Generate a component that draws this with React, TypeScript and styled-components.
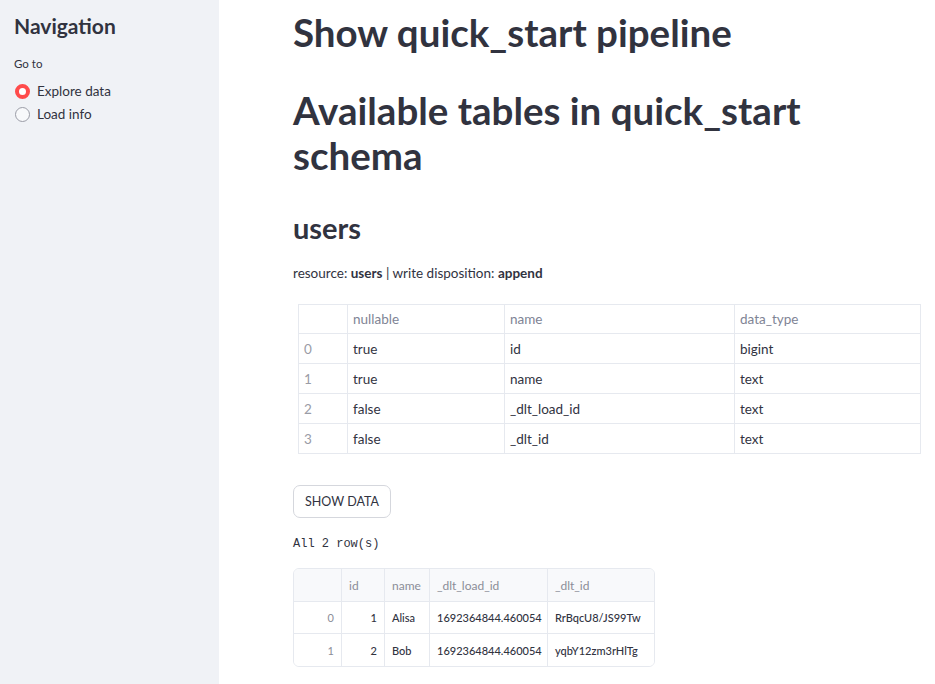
import React from "react";
import styled, { createGlobalStyle } from "styled-components";

const Global = createGlobalStyle`
  html, body { margin: 0; padding: 0; background: #ffffff; }
  body { font-family: "Lato", "Noto Sans", sans-serif; color: #31333f; }
  * { box-sizing: border-box; }
`;

const Page = styled.div`
  display: flex;
  width: 935px;
  height: 684px;
  overflow: hidden;
`;

const Sidebar = styled.aside`
  width: 219px;
  flex: none;
  background: #f0f2f6;
  padding: 12px 14px;
  display: flex;
  flex-direction: column;
`;

const SideTitle = styled.h2`
  margin: 0;
  font-size: 21px;
  font-weight: 700;
  line-height: 28px;
  color: #31333f;
`;

const SideLabel = styled.div`
  margin-top: 17px;
  font-size: 11.5px;
  line-height: 14px;
  color: #31333f;
`;

const RadioList = styled.div`
  margin-top: 12px;
  display: flex;
  flex-direction: column;
  gap: 7px;
  padding-left: 1px;
`;

const RadioRow = styled.label`
  display: flex;
  align-items: center;
  gap: 7px;
  font-size: 13.5px;
  line-height: 16px;
`;

const RadioDot = styled.span<{ $on?: boolean }>`
  width: 15px;
  height: 15px;
  border-radius: 50%;
  flex: none;
  background: ${(p) => (p.$on ? "#ffffff" : "#f8f9fb")};
  border: ${(p) => (p.$on ? "4px solid #ff4b4b" : "1px solid #9a9ca6")};
`;

const Main = styled.main`
  flex: 1;
  padding: 10px 15px 0 74px;
  display: flex;
  flex-direction: column;
  min-width: 0;
`;

const Title = styled.h1<{ $mt?: number }>`
  margin: 0;
  margin-top: ${(p) => p.$mt ?? 0}px;
  font-size: 38.5px;
  line-height: 45px;
  font-weight: 700;
  color: #31333f;
`;

const Sub = styled.h3`
  margin: 32px 0 0;
  font-size: 29px;
  line-height: 36px;
  font-weight: 700;
  color: #31333f;
`;

const Caption = styled.p`
  margin: 18px 0 0;
  font-size: 13.5px;
  line-height: 18px;
`;

const SchemaTable = styled.table`
  margin: 22px 0 0 5px;
  border-collapse: collapse;
  width: 623px;
  font-size: 13.5px;
  table-layout: fixed;
`;

const STh = styled.th<{ $w?: number }>`
  width: ${(p) => (p.$w ? `${p.$w}px` : "auto")};
  border: 1px solid #e6e9ef;
  text-align: left;
  font-weight: 400;
  color: #808495;
  height: 29px;
  padding: 0 5px;
`;

const STd = styled.td<{ $idx?: boolean }>`
  border: 1px solid #e6e9ef;
  height: 30px;
  padding: 0 5px;
  color: ${(p) => (p.$idx ? "#9a9ca6" : "#31333f")};
`;

const Button = styled.button`
  margin-top: 31px;
  align-self: flex-start;
  height: 33px;
  padding: 0 11px;
  border: 1px solid #d5d7dd;
  border-radius: 7px;
  background: #ffffff;
  font-family: inherit;
  font-size: 12.5px;
  color: #31333f;
`;

const Mono = styled.div`
  margin-top: 18px;
  font-family: "Liberation Mono", "DejaVu Sans Mono", monospace;
  font-size: 12px;
  line-height: 16px;
`;

const Frame = styled.div`
  margin-top: 16px;
  align-self: flex-start;
  border: 1px solid #e6e9ef;
  border-radius: 6px;
  overflow: hidden;
`;

const Grid = styled.div`
  display: grid;
  grid-template-columns: 48px 43px 45px 118px 106px;
  font-size: 11px;
`;

const GCell = styled.div<{ $head?: boolean; $right?: boolean; $idx?: boolean; $last?: boolean; $lastRow?: boolean }>`
  height: ${(p) => (p.$head ? 33 : 32)}px;
  display: flex;
  align-items: center;
  justify-content: ${(p) => (p.$right ? "flex-end" : "flex-start")};
  padding: 0 7px;
  white-space: nowrap;
  background: ${(p) => (p.$head ? "#f8f9fb" : "#ffffff")};
  color: ${(p) => (p.$head || p.$idx ? "#8b8d98" : "#31333f")};
  font-size: ${(p) => (p.$head ? 12 : 11)}px;
  font-weight: ${(p) => (p.$head || p.$idx ? 400 : 500)};
  border-right: ${(p) => (p.$last ? "none" : "1px solid #e6e9ef")};
  border-bottom: ${(p) => (p.$lastRow ? "none" : "1px solid #e6e9ef")};
`;

const schema = [
  ["0", "true", "id", "bigint"],
  ["1", "true", "name", "text"],
  ["2", "false", "_dlt_load_id", "text"],
  ["3", "false", "_dlt_id", "text"],
];

const data = [
  ["0", "1", "Alisa", "1692364844.460054", "RrBqcU8/JS99Tw"],
  ["1", "2", "Bob", "1692364844.460054", "yqbY12zm3rHlTg"],
];

const heads = ["", "id", "name", "_dlt_load_id", "_dlt_id"];

export default function App() {
  return (
    <Page>
      <Global />
      <Sidebar>
        <SideTitle>Navigation</SideTitle>
        <SideLabel>Go to</SideLabel>
        <RadioList>
          <RadioRow>
            <RadioDot $on />
            Explore data
          </RadioRow>
          <RadioRow>
            <RadioDot />
            Load info
          </RadioRow>
        </RadioList>
      </Sidebar>
      <Main>
        <Title>Show quick_start pipeline</Title>
        <Title $mt={33}>Available tables in quick_start schema</Title>
        <Sub>users</Sub>
        <Caption>
          resource: <b>users</b> | write disposition: <b>append</b>
        </Caption>
        <SchemaTable>
          <thead>
            <tr>
              <STh $w={49}></STh>
              <STh $w={157}>nullable</STh>
              <STh $w={230}>name</STh>
              <STh>data_type</STh>
            </tr>
          </thead>
          <tbody>
            {schema.map((r) => (
              <tr key={r[0]}>
                <STd $idx>{r[0]}</STd>
                <STd>{r[1]}</STd>
                <STd>{r[2]}</STd>
                <STd>{r[3]}</STd>
              </tr>
            ))}
          </tbody>
        </SchemaTable>
        <Button>SHOW DATA</Button>
        <Mono>All 2 row(s)</Mono>
        <Frame>
          <Grid>
            {heads.map((h, i) => (
              <GCell key={"h" + i} $head $last={i === 4}>
                {h}
              </GCell>
            ))}
            {data.map((r, ri) =>
              r.map((v, ci) => (
                <GCell
                  key={ri + "-" + ci}
                  $right={ci < 2}
                  $idx={ci === 0}
                  $last={ci === 4}
                  $lastRow={ri === data.length - 1}
                >
                  {v}
                </GCell>
              ))
            )}
          </Grid>
        </Frame>
      </Main>
    </Page>
  );
}
